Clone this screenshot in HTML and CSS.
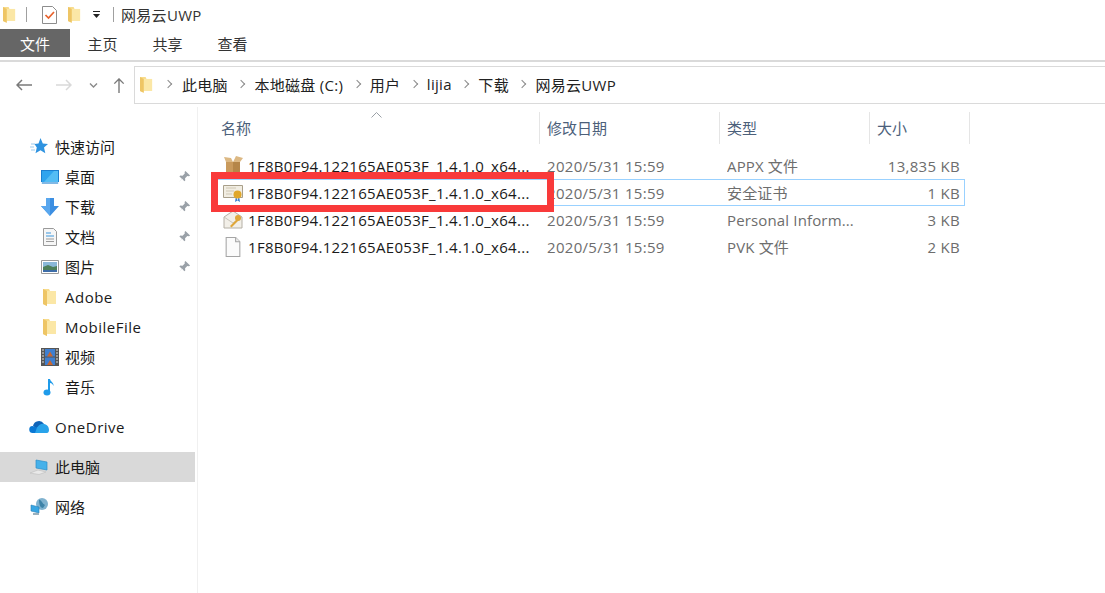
FILE: index.html
```html
<!DOCTYPE html>
<html>
<head>
  <title>网易云UWP</title>
  <link rel="stylesheet" href="styles.css">
</head>
<body>
  <svg class="defs" width="0" height="0">
    <defs>
      <symbol id="folder" viewBox="0 0 14 18">
        <path d="M0 1h6l1 2h6v13H4v2L0 16z" fill="#f8dc8c"/>
        <path d="M4 3h9v13H4z" fill="#fbe7a6"/>
        <path d="M0 1l4 2v15l-4-2z" fill="#eec565"/>
      </symbol>
      <symbol id="pin" viewBox="0 0 14 14">
        <path d="M8 1l5 5-1.200 .6-1.800-.2-2.400 2.400.2 2.400-1 1-2.300-2.900L1 13l3.200-3.500L1.500 7l1-1 2.400.3 2.400-2.400-.2-1.800z" fill="#9aa1a8"/>
      </symbol>
    </defs>
  </svg>

  <div class="window">
    <div class="titlebar">
      <svg class="ic-folder"><use href="#folder"/></svg>
      <span class="bar-sep"></span>
      <svg class="ic-check" viewBox="0 0 15 18">
        <path d="M.5.500h10l4 4v13H.5z" fill="#fff" stroke="#8d8d8d"/>
        <path d="M3.500 9l3 3 5.500-6" fill="none" stroke="#e8622c" stroke-width="1.700"/>
      </svg>
      <svg class="ic-folder"><use href="#folder"/></svg>
      <svg class="ic-drop" viewBox="0 0 7 7">
        <path d="M0 0h7v1H0zM0 3h7L3.500 7z" fill="#222"/>
      </svg>
      <span class="bar-sep"></span>
      <span class="title">网易云UWP</span>
    </div>

    <div class="tabs">
      <div class="tab tab-file">文件</div>
      <div class="tab">主页</div>
      <div class="tab">共享</div>
      <div class="tab">查看</div>
    </div>

    <div class="navrow">
      <div class="navbtns">
        <svg class="nav-ic" viewBox="0 0 16 12"><path d="M16 6H1M6 1L1 6l5 5" fill="none" stroke="#7a7a7a" stroke-width="1.500"/></svg>
        <svg class="nav-ic nav-next" viewBox="0 0 16 12"><path d="M0 6h15M10 1l5 5-5 5" fill="none" stroke="#d9d9d9" stroke-width="1.500"/></svg>
        <svg class="nav-down" viewBox="0 0 8 5"><path d="M.5.500L4 4 7.500.5" fill="none" stroke="#8a8a8a" stroke-width="1.400"/></svg>
        <svg class="nav-up" viewBox="0 0 12 16"><path d="M6 16V1M1 6l5-5 5 5" fill="none" stroke="#7a7a7a" stroke-width="1.500"/></svg>
      </div>
      <div class="address">
        <svg class="ic-folder"><use href="#folder"/></svg>
        <span class="crumb-arrow first"></span><span class="crumb">此电脑</span>
        <span class="crumb-arrow"></span><span class="crumb">本地磁盘 (C:)</span>
        <span class="crumb-arrow"></span><span class="crumb">用户</span>
        <span class="crumb-arrow"></span><span class="crumb">lijia</span>
        <span class="crumb-arrow"></span><span class="crumb">下载</span>
        <span class="crumb-arrow"></span><span class="crumb">网易云UWP</span>
      </div>
    </div>

    <div class="main">
      <div class="sidebar">
        <div class="side-group">
          <div class="side-row top">
            <svg class="side-ic" viewBox="0 0 18 18">
              <path d="M10.500 0l2.300 5.500 5.200.4-4 3.600 1.300 5.800-4.800-3-5 3 1.300-5.800L4.500 5.900l4-.4z" fill="#2f93e0"/>
              <path d="M1 6h4M0 9h4M1 12h4" stroke="#9ccbee" stroke-width="1"/>
            </svg>
            快速访问
          </div>
          <div class="side-row sub">
            <svg class="side-ic" viewBox="0 0 18 14">
              <path d="M0 0h18v14H0z" fill="#1c7fd0"/>
              <path d="M1 1h16v11H1z" fill="#2fa4ee"/>
              <path d="M3 12L13 1h4v11z" fill="#54bdf4"/>
              <path d="M0 12h18v2H0z" fill="#e6f3fb"/>
              <path d="M1 13h16" stroke="#1c7fd0"/>
            </svg>
            桌面<svg class="pin"><use href="#pin"/></svg>
          </div>
          <div class="side-row sub">
            <svg class="side-ic" viewBox="0 0 18 18">
              <path d="M5 0h8v8h5l-9 10L0 8h5z" fill="#3c8fe2"/>
              <path d="M5 0h4v18L0 8h5z" fill="#59a7ee"/>
            </svg>
            下载<svg class="pin"><use href="#pin"/></svg>
          </div>
          <div class="side-row sub">
            <svg class="side-ic" viewBox="0 0 18 18">
              <path d="M2.500.500h10l3 3v14h-13z" fill="#f6f6f6" stroke="#9a9a9a"/>
              <path d="M5 5h5M5 8h8" stroke="#3a96dc" stroke-width="1.200"/>
              <path d="M5 11h8M5 13.500h8" stroke="#9a9a9a"/>
            </svg>
            文档<svg class="pin"><use href="#pin"/></svg>
          </div>
          <div class="side-row sub">
            <svg class="side-ic" viewBox="0 0 18 14">
              <path d="M.5.500h17v13H.5z" fill="#fff" stroke="#9a9a9a"/>
              <path d="M2 2h14v5H2z" fill="#8ab8d8"/>
              <path d="M2 7l5-2 5 2 4-1v6H2z" fill="#4d7f5a"/>
              <path d="M2 10h14v2H2z" fill="#3d6da8"/>
            </svg>
            图片<svg class="pin"><use href="#pin"/></svg>
          </div>
          <div class="side-row sub latin">
            <svg class="side-ic folder-small"><use href="#folder"/></svg>
            Adobe
          </div>
          <div class="side-row sub latin">
            <svg class="side-ic folder-small"><use href="#folder"/></svg>
            MobileFile
          </div>
          <div class="side-row sub">
            <svg class="side-ic" viewBox="0 0 18 18">
              <path d="M0 0h18v18H0z" fill="#555"/>
              <path d="M4 1h10v7.500H4z" fill="#3f7fd0"/>
              <path d="M4 9.500h10V17H4z" fill="#3f7fd0"/>
              <path d="M6 8.500l3-5 3 5zM6 17l3-5 3 5z" fill="#c9662f"/>
              <path d="M1 2h2M1 5h2M1 8h2M1 11h2M1 14h2M15 2h2M15 5h2M15 8h2M15 11h2M15 14h2" stroke="#ddd" stroke-width="1.200"/>
            </svg>
            视频
          </div>
          <div class="side-row sub">
            <svg class="side-ic" viewBox="0 0 18 18">
              <path d="M8 1v12.500" stroke="#1f9bea" stroke-width="2"/>
              <path d="M9 1c.5 3 4 3.500 3.500 7-.8-2-2-2.700-3.500-3z" fill="#1f9bea"/>
              <ellipse cx="6" cy="14.500" rx="3.500" ry="3" fill="#1f9bea"/>
            </svg>
            音乐
          </div>
        </div>

        <div class="side-group">
          <div class="side-row top latin">
            <svg class="side-ic cloud" viewBox="0 0 20 14">
              <path d="M4 6a6 6 0 0 1 11-2l-5 6z" fill="#0f64b8"/>
              <path d="M4 13a3.500 3.500 0 0 1-.5-7L10 8l3 5z" fill="#0a78d4"/>
              <path d="M8 7.500c2-3 5-4.500 7-3.500 3 .3 5 3 5 6 0 2-1 3-2 3H6z" fill="#29a3ea"/>
            </svg>
            OneDrive
          </div>
        </div>

        <div class="side-group">
          <div class="side-row top selected">
            <svg class="side-ic" viewBox="0 0 18 16">
              <path d="M6 1l11 2v8L6 9z" fill="#46b1ea" stroke="#2b8ec8" stroke-width=".7"/>
              <path d="M0 14l8-3 8 2-7 2.500z" fill="#e9e9e9" stroke="#bdbdbd" stroke-width=".6"/>
            </svg>
            此电脑
          </div>
        </div>

        <div class="side-group">
          <div class="side-row top">
            <svg class="side-ic" viewBox="0 0 18 18">
              <circle cx="12" cy="6" r="6" fill="#7fb2cf"/>
              <path d="M9 1.500c3 1 3 4 6 5.500l-2 3c-3 0-4-4-4-8.500z" fill="#3d83a8"/>
              <path d="M1 7l8 2v6l-8-2z" fill="#37a6e4" stroke="#2a7fb4" stroke-width=".6"/>
              <path d="M3 15h6v2H3z" fill="#9ab0bd"/>
            </svg>
            网络
          </div>
        </div>
      </div>

      <div class="content">
        <div class="list-head">
          <svg class="sort-caret" viewBox="0 0 11 6"><path d="M.5 5.500L5.500.5l5 5" fill="none" stroke="#9aa0a6"/></svg>
          <div class="col col-name">名称</div>
          <div class="col col-date">修改日期</div>
          <div class="col col-type">类型</div>
          <div class="col col-size">大小</div>
        </div>

        <div class="row">
          <svg class="file-ic" viewBox="0 0 20 20">
            <path d="M3 6h14v14H3z" fill="#c99a5c"/>
            <path d="M10 6h7v14h-7z" fill="#b58648"/>
            <path d="M3 6L1 1l7 1 2 4zM17 6l3-4-7-2-3 6z" fill="#dcb883"/>
          </svg>
          <div class="cell-name">1F8B0F94.122165AE053F_1.4.1.0_x64...</div>
          <div class="cell-date">2020/5/31 15:59</div>
          <div class="cell-type">APPX 文件</div>
          <div class="cell-size">13,835 KB</div>
        </div>
        <div class="row row-focus">
          <svg class="file-ic" viewBox="0 0 20 18">
            <path d="M.5 1.500h19v12H.5z" fill="#f1ede2" stroke="#a89f8a"/>
            <path d="M3 4h10M3 7h8M3 10h6" stroke="#cfc7b4"/>
            <path d="M13 12l-1 6 2.500-1.500zM16 12l1 6-2.500-1.500z" fill="#3a7fd0"/>
            <circle cx="14.500" cy="10.500" r="4" fill="#e0a72a"/>
          </svg>
          <div class="cell-name">1F8B0F94.122165AE053F_1.4.1.0_x64...</div>
          <div class="cell-date">2020/5/31 15:59</div>
          <div class="cell-type">安全证书</div>
          <div class="cell-size">1 KB</div>
        </div>
        <div class="row">
          <svg class="file-ic" viewBox="0 0 20 18">
            <path d="M1 6l9-6 9 6v11H1z" fill="#f2efe8" stroke="#b5b0a6"/>
            <path d="M1 6l9 6 9-6" fill="none" stroke="#c9c4ba"/>
            <circle cx="15" cy="7" r="3" fill="#dfa73a"/>
            <path d="M13.500 8.500L7 15l1.500 1.500 7-7" fill="#dfa73a"/>
          </svg>
          <div class="cell-name">1F8B0F94.122165AE053F_1.4.1.0_x64...</div>
          <div class="cell-date">2020/5/31 15:59</div>
          <div class="cell-type">Personal Inform...</div>
          <div class="cell-size">3 KB</div>
        </div>
        <div class="row">
          <svg class="file-ic" viewBox="0 0 16 19">
            <path d="M1.500.500h9l4 4v14h-13z" fill="#fbfbfb" stroke="#a5a5a5"/>
            <path d="M10.500.500v4h4" fill="#eee" stroke="#a5a5a5"/>
          </svg>
          <div class="cell-name">1F8B0F94.122165AE053F_1.4.1.0_x64...</div>
          <div class="cell-date">2020/5/31 15:59</div>
          <div class="cell-type">PVK 文件</div>
          <div class="cell-size">2 KB</div>
        </div>

        <div class="red-mark"></div>
      </div>
    </div>
  </div>
</body>
</html>
```

FILE: styles.css
```css
html, body {
  margin: 0;
  height: 100%;
  background: #fff;
  overflow: hidden;
}

body {
  font-family: "Open Sans", "Noto Sans CJK SC", sans-serif;
  font-size: 15px;
  color: #1a1a1a;
}

.defs {
  position: absolute;
}

.window {
  display: flex;
  flex-direction: column;
  height: 593px;
}

/* title bar */
.titlebar {
  display: flex;
  align-items: center;
  height: 29px;
  padding-left: 3px;
}

.ic-folder {
  width: 13px;
  height: 17px;
  flex: none;
}

.bar-sep {
  width: 1px;
  height: 15px;
  margin-left: 10px;
  background: #a0a0a0;
}

.ic-check {
  width: 15px;
  height: 18px;
  margin: 0 11px 0 15px;
}

.ic-drop {
  width: 7px;
  height: 7px;
  margin-left: 12px;
}

.titlebar .bar-sep:nth-of-type(2) {
  margin-left: 13px;
}

.title {
  margin-left: 7px;
  font-size: 15px;
  letter-spacing: .3px;
  color: #333;
}

/* ribbon tabs */
.tabs {
  display: flex;
  height: 31px;
  border-bottom: 2px solid #dadada;
}

.tab {
  width: 65px;
  height: 28px;
  line-height: 30px;
  text-align: center;
  font-size: 15px;
  color: #333;
}

.tab-file {
  width: 70px;
  background: #666;
  color: #fff;
}

/* nav + address */
.navrow {
  display: flex;
  height: 41px;
  margin-top: 4px;
}

.navbtns {
  display: flex;
  align-items: center;
  width: 134px;
  height: 38px;
  flex: none;
  padding-left: 16px;
  box-sizing: border-box;
}

.nav-ic {
  width: 16px;
  height: 12px;
}

.nav-next {
  margin-left: 24px;
}

.nav-down {
  width: 9px;
  height: 5px;
  margin-left: 17px;
}

.nav-up {
  width: 12px;
  height: 15px;
  margin-left: 15px;
}

.address {
  display: flex;
  align-items: center;
  flex: 1;
  height: 38px;
  padding-left: 5px;
  padding-bottom: 2px;
  border: 1px solid #dadada;
  border-right: 0;
  font-size: 15px;
  box-sizing: border-box;
}

.crumb-arrow {
  width: 5px;
  height: 5px;
  margin: 0 10px 0 10.500px;
  border-top: 1.500px solid #8a8a8a;
  border-right: 1.500px solid #8a8a8a;
  transform: rotate(45deg);
  flex: none;
}

.crumb-arrow.first {
  margin: 0 11px 0 12px;
}

.crumb {
  white-space: nowrap;
  letter-spacing: .3px;
  color: #222;
}

/* main area */
.main {
  display: flex;
  flex: 1;
  min-height: 0;
}

.sidebar {
  width: 197px;
  flex: none;
  padding-top: 25px;
  border-right: 1px solid #f0f0f0;
}

.side-group {
  margin-bottom: 10px;
}

.side-row {
  position: relative;
  display: flex;
  align-items: center;
  width: 195px;
  height: 30px;
  padding-bottom: 2px;
  font-size: 15px;
  color: #1a1a1a;
  white-space: nowrap;
}

.side-row.latin {
  letter-spacing: .5px;
  padding-bottom: 0;
}

.side-row.top {
  padding-left: 30px;
  box-sizing: border-box;
}

.side-row.sub {
  padding-left: 41px;
  box-sizing: border-box;
}

.side-row.selected {
  background: #d9d9d9;
}

.side-ic {
  width: 18px;
  height: 18px;
  margin-top: 2px;
  margin-right: 7px;
  flex: none;
}

.side-row.latin .side-ic {
  margin-top: 0;
}

.side-row.sub .side-ic {
  margin-right: 6px;
}

.side-ic.cloud {
  width: 20px;
  height: 14px;
  margin: 0 6px 0 -1px;
}

.pin {
  position: absolute;
  left: 178px;
  top: 8px;
  width: 13px;
  height: 13px;
}

/* file list */
.content {
  position: relative;
  flex: 1;
}

.list-head {
  position: relative;
  display: flex;
  height: 32px;
  margin: 5px 0 8px 16px;
  line-height: 32px;
  font-size: 15px;
  color: #4c607a;
}

.sort-caret {
  position: absolute;
  left: 157px;
  top: 0;
  width: 11px;
  height: 6px;
}

.col {
  padding-left: 7px;
  border-right: 1px solid #e5e5e5;
  box-sizing: border-box;
}

.col-name { width: 326px; }
.col-date { width: 180px; }
.col-type { width: 150px; }
.col-size { width: 100px; }

.row {
  display: flex;
  align-items: center;
  width: 748px;
  height: 27px;
  margin-left: 19px;
  box-sizing: border-box;
  color: #6d6d6d;
  font-size: 15px;
  letter-spacing: .3px;
  white-space: nowrap;
}

.row-focus {
  outline: 1px solid #99d1ff;
  outline-offset: -1px;
}

.file-ic {
  width: 20px;
  height: 20px;
  margin-left: 6px;
  flex: none;
}

.cell-name {
  width: 299px;
  margin-left: 5px;
  color: #1a1a1a;
}

.cell-date {
  width: 180px;
}

.cell-type {
  width: 130px;
  overflow: hidden;
  letter-spacing: .15px;
}

.cell-size {
  width: 103px;
  text-align: right;
}

/* red annotation drawn over the list */
.red-mark {
  position: absolute;
  left: 13px;
  top: 65px;
  width: 343px;
  height: 40px;
  border: 7px solid #f93a3a;
  box-sizing: border-box;
}
```
